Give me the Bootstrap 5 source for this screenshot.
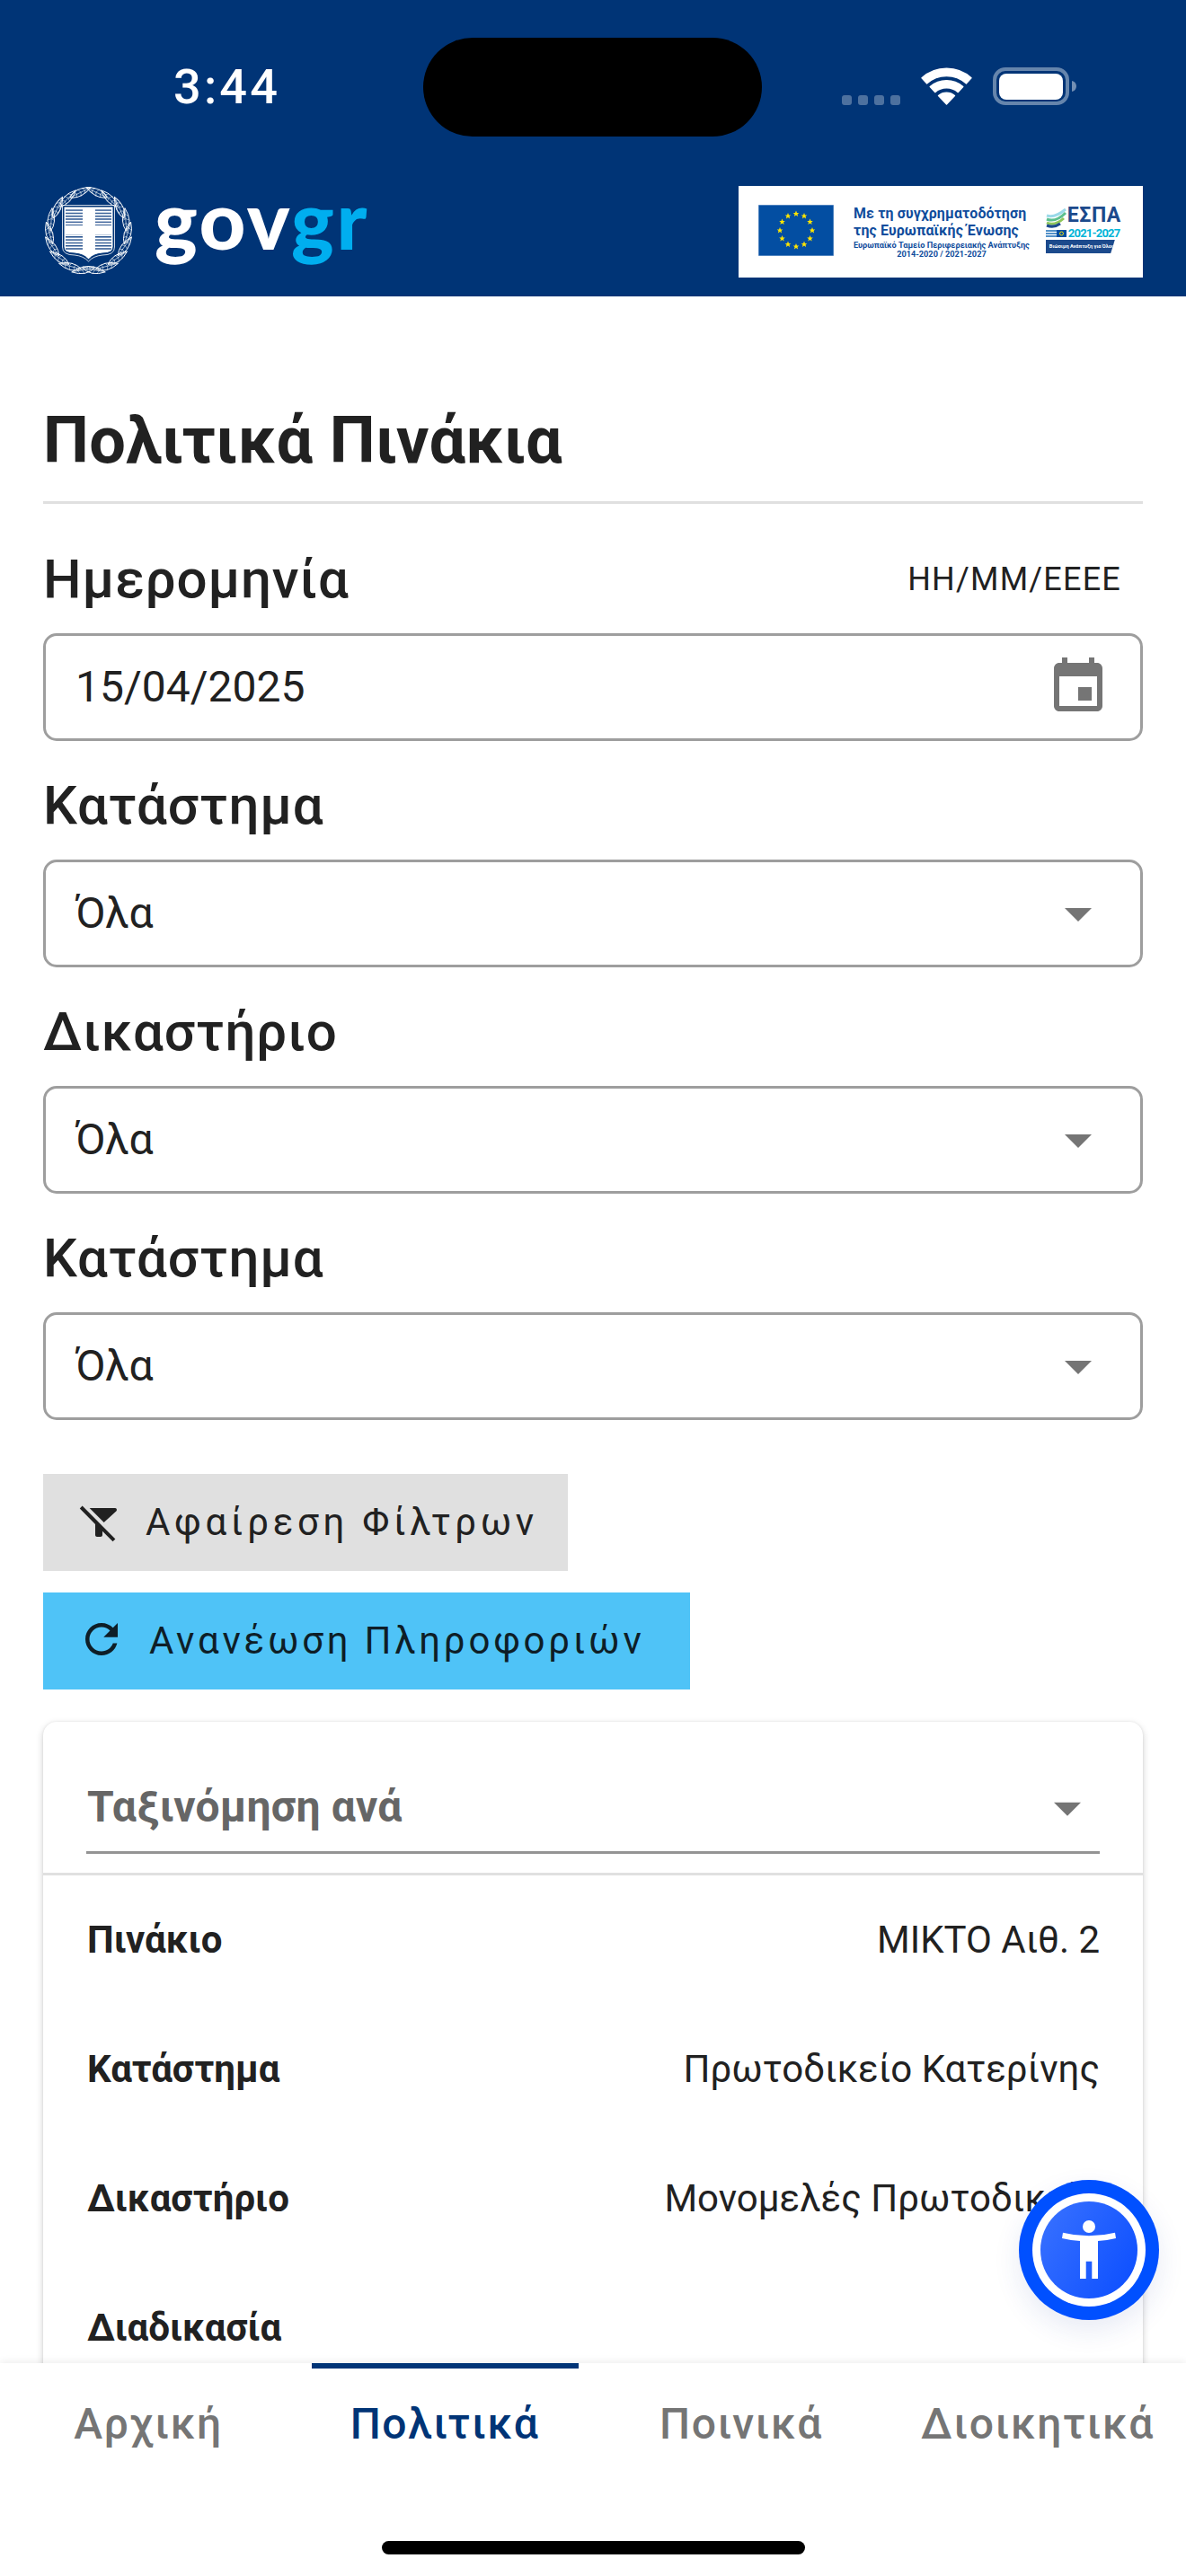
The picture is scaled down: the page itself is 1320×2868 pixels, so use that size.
<!DOCTYPE html>
<html lang="el">
<head>
<meta charset="utf-8">
<title>Πολιτικά Πινάκια</title>
<link href="https://cdn.jsdelivr.net/npm/bootstrap@5.3.0/dist/css/bootstrap.min.css" rel="stylesheet">
<style>
body{font-family:Roboto,"Liberation Sans",sans-serif;color:#212121;background:#fff}
.gov-head{background:#003476;height:330px;flex:0 0 330px}
.status-row{height:110px;margin-top:42px;margin-bottom:55px;color:#fff}
.clock{flex:0 0 471px;padding-left:193px;font-size:54px;font-weight:500;line-height:110px;letter-spacing:3.2px}
.island{flex:0 0 377px;height:110px;background:#000;border-radius:55px}
.sys-icons{padding-left:89px;height:42px;margin-top:33px;align-items:flex-end}
.sig-dot{width:11px;height:11px;border-radius:3px;background:rgba(255,255,255,.3);margin-right:7px}
.wifi-ic{margin-left:16px;margin-right:23px}
.brand-row{padding:0 48px;height:102px}
.emblem{margin-right:23px}
.gov-word{font-family:Lato,sans-serif;font-weight:900;font-size:90px;line-height:100px;letter-spacing:2.6px;color:#fff;margin-top:-30px}
.gov-word span{color:#00aeef}
.espa-box{width:450px;height:102px;background:#fff;padding:21px 27px 0 22px;color:#0f4c9c}
.espa-txt{width:196px;margin-left:22px;font-weight:700;text-align:center;white-space:nowrap}
.espa-l1{font-size:15.9px;line-height:19px;text-align:left;letter-spacing:.15px}
.espa-l3{font-size:9.2px;line-height:11px;margin-top:1px;text-align:left}
.espa-l4{font-size:9.2px;line-height:10px}
.espa-mark{margin-left:18px;width:84px;white-space:nowrap}
.espa-name{font-size:23px;font-weight:700;line-height:24px;color:#1c4a8c;letter-spacing:.6px;margin-left:24px}
.espa-yrs{font-size:13px;font-weight:700;line-height:14px;color:#00b4d8;margin-left:25px;margin-top:1px;letter-spacing:-.8px}
.espa-tag{font-size:5.6px;font-weight:700;line-height:15px;height:15px;width:77px;background:#1c4a8c;color:#fff;padding-left:4px;clip-path:polygon(0 0,100% 0,94% 100%,0 100%)}
.waves{left:0;top:3px}
.main-pane{padding:119px 48px 0;min-height:0}
.page-title{font-size:72px;line-height:84px;font-weight:700;letter-spacing:.3px;padding-bottom:25px;margin:0 0 48px;border-bottom:3px solid #e0e0e0;color:#212121}
.fld-head{height:72px;margin-bottom:24px}
.fld-label{font-size:60px;line-height:72px;font-weight:500;letter-spacing:.85px;margin:0}
.fld-hint{font-size:36px;line-height:72px;padding-right:24px;letter-spacing:1.2px}
.fld-box{height:120px;border:3px solid #9e9e9e;border-radius:15px;padding:0 33px;font-size:48px;line-height:56px;color:#212121;margin-bottom:36px;background:#fff}
.fld-box:last-child{margin-bottom:0}
.fld-ic{fill:#757575;flex:none}
.act-wrap{margin-top:60px;gap:24px}
.act-btn{height:108px;border:0;border-radius:0;font-size:42px;line-height:50px;letter-spacing:4.7px;color:#212121;padding:0 0 0 38px;white-space:nowrap}
.act-clear{width:584px;background:#e0e0e0;gap:22px}
.act-clear:hover{background:#e0e0e0}
.act-refresh{width:720px;background:#4fc3f7;color:#0e1e27;gap:26px;letter-spacing:3.75px}
.act-refresh:hover{background:#4fc3f7}
.act-btn svg{fill:#212121;flex:none}
.act-refresh svg{fill:#0e1e27}
.list-card{margin-top:36px;border:0;border-radius:15px 15px 0 0;box-shadow:0 3px 9px rgba(0,0,0,.18),0 0 3px rgba(0,0,0,.08)}
.sort-head{padding:67px 48px 21px;border-bottom:3px solid #e0e0e0}
.sort-line{border-bottom:3px solid #949494;padding:0 0 21px 1px;font-size:48px;line-height:56px;font-weight:700;letter-spacing:.2px;color:#666}
.rec-body{padding:48px 48px 0 48px;font-size:42px;line-height:48px}
.rec-row{margin-bottom:96px;white-space:nowrap}
.rec-key{font-weight:700;padding-left:1px}
.bottom-tabs{flex:0 0 237px;height:237px;background:#fff;box-shadow:0 -2px 8px rgba(0,0,0,.07);z-index:2;margin:0;padding:0;flex-wrap:nowrap}
.tab-item{flex:0 0 330px;padding:40px 0 0;text-align:center;font-size:48px;line-height:56px;font-weight:500;color:#757575;letter-spacing:1.6px}
.tab-item:hover{color:#757575}
.tab-on{color:#003476}
.tab-on:hover{color:#003476}
.tab-on::before{content:"";position:absolute;left:17px;right:16px;top:0;height:6px;background:#003476}
.home-bar{left:425px;top:2829px;width:471px;height:15px;background:#000;border-radius:8px;z-index:3}
.a11y-fab{right:30px;top:2427px;width:156px;height:156px;padding:15px;background:#0050ff;border-radius:50%;box-shadow:0 12px 30px rgba(30,60,160,.1);z-index:4}
.a11y-ring{width:126px;height:126px;padding:9px;background:#fff;border-radius:50%}
.a11y-core{width:108px;height:108px;border-radius:50%;background:linear-gradient(120deg,#3a72ff,#0a4dff)}
</style>
</head>
<body class="d-flex flex-column vh-100 overflow-hidden position-relative">
<header class="gov-head">
  <div class="status-row d-flex">
    <div class="clock">3:44</div>
    <div class="island"></div>
    <div class="sys-icons d-flex">
      <span class="sig-dot"></span><span class="sig-dot"></span><span class="sig-dot"></span><span class="sig-dot"></span>
      <svg class="wifi-ic" width="57" height="42" viewBox="0 0 57 42" fill="#fff" stroke="#fff" stroke-width="1.4" stroke-linejoin="round"><path d="M1 11.8A41 41 0 0 1 56 11.8L50.5 17.9A33 33 0 0 0 6.5 17.9Z"/><path d="M10.2 21.6A28 28 0 0 1 46.8 21.6L41.3 27.6A19.5 19.5 0 0 0 15.7 27.6Z"/><path d="M19.5 31.6A14 14 0 0 1 37.5 31.6L28.5 41Z"/></svg>
      <svg width="93" height="42" viewBox="0 0 93 42"><rect x="2" y="2" width="81" height="38" rx="12" fill="none" stroke="#fff" stroke-opacity=".4" stroke-width="4"/><rect x="7" y="7" width="71" height="29" rx="8" fill="#fff"/><path d="M88 15c3 .6 5 3 5 6s-2 5.400-5 6Z" fill="#fff" fill-opacity=".45"/></svg>
    </div>
  </div>
  <div class="brand-row d-flex justify-content-between align-items-center">
    <div class="d-flex align-items-center">
      <svg class="emblem" width="101" height="102" viewBox="0 0 101 102">
        <defs>
          <g id="lf" fill="none" stroke="#fff" stroke-width=".9"><path d="M-13 0Q-2 -8 13 0Q-2 7 -13 0Z"/><path d="M-12 0H12" stroke-width=".6"/><path d="M-6 -3.500L-4 0M-1 -4.500L1 0M4 -3.500L6 0M-6 3L-4 0M-1 4L1 0M4 3L6 0" stroke-width=".5"/></g>
          <g id="sd">
            <use href="#lf" transform="rotate(-72 50.5 51) translate(50.5 7.500) rotate(-14)"/>
            <use href="#lf" transform="rotate(-52 50.5 51) translate(50.5 7.500) rotate(-14)"/>
            <use href="#lf" transform="rotate(-32 50.5 51) translate(50.5 7.500) rotate(-14)"/>
            <use href="#lf" transform="rotate(-12 50.5 51) translate(50.5 6.500) rotate(-14)"/>
            <use href="#lf" transform="rotate(-92 50.5 51) translate(50.5 7.500) rotate(-14)"/>
            <use href="#lf" transform="rotate(-112 50.500 51) translate(50.5 7.500) rotate(-14)"/>
            <use href="#lf" transform="rotate(-132 50.500 51) translate(50.5 7.500) rotate(-14)"/>
            <use href="#lf" transform="rotate(-152 50.500 51) translate(50.5 7.500) rotate(-14)"/>
            <use href="#lf" transform="rotate(-172 50.500 51) translate(50.500 8) rotate(-18)"/>
          </g>
          <pattern id="st" width="6" height="3.300" patternUnits="userSpaceOnUse"><rect width="6" height="3.300" fill="#fff"/><rect width="6" height="1.400" fill="#234f8c"/></pattern>
        </defs>
        <use href="#sd"/>
        <use href="#sd" transform="translate(101 0) scale(-1 1)"/>
        <path d="M23 23H78V68Q78 75 66 75Q55 76 50.500 82Q46 76 35 75Q23 75 23 68Z" fill="#fff" stroke="#003476" stroke-width="1"/>
        <path d="M21.500 21.500H79.500V68Q79.500 77 66 77Q56 78 50.500 84Q45 78 35 77Q21.500 77 21.500 68Z" fill="none" stroke="#fff" stroke-width=".8"/>
        <rect x="25" y="25" width="19" height="19" fill="url(#st)"/><rect x="58" y="25" width="18" height="19" fill="url(#st)"/><rect x="25" y="54" width="19" height="17" fill="url(#st)"/><rect x="58" y="54" width="18" height="17" fill="url(#st)"/>
      </svg>
      <div class="gov-word">gov<span>gr</span></div>
    </div>
    <div class="espa-box d-flex">
      <svg width="84" height="57" viewBox="0 0 84 57" class="flex-shrink-0">
        <defs><polygon id="str" points="0,-3.400 1,-1 3.300,-1 1.500,.5 2.100,2.900 0,1.400 -2.100,2.900 -1.500,.5 -3.300,-1 -1,-1" fill="#ffe500"/></defs>
        <rect width="84" height="57" fill="#034ea2" stroke="#9db8dc" stroke-width="1"/>
        <use href="#str" x="42" y="10"/><use href="#str" x="51" y="12.500"/><use href="#str" x="57.500" y="19"/><use href="#str" x="60" y="28.500"/><use href="#str" x="57.500" y="37.500"/><use href="#str" x="51" y="44"/><use href="#str" x="42" y="46.500"/><use href="#str" x="33" y="44"/><use href="#str" x="26.500" y="37.500"/><use href="#str" x="24" y="28.500"/><use href="#str" x="26.500" y="19"/><use href="#str" x="33" y="12.500"/>
      </svg>
      <div class="espa-txt">
        <div class="espa-l1">Με τη συγχρηματοδότηση</div>
        <div class="espa-l1">της Ευρωπαϊκής Ένωσης</div>
        <div class="espa-l3">Ευρωπαϊκό Ταμείο Περιφερειακής Ανάπτυξης</div>
        <div class="espa-l4">2014-2020 / 2021-2027</div>
      </div>
      <div class="espa-mark position-relative">
        <svg class="waves position-absolute" width="24" height="37" viewBox="0 0 24 37" fill="none" stroke-width="3"><path d="M1 9Q10 12 22 2" stroke="#9ad9e8"/><path d="M1 13Q11 17 22 6" stroke="#5bbf8e"/><path d="M1 17Q10 21 20 12" stroke="#8fc65b"/><path d="M1 20Q9 23 16 18" stroke="#1c4a8c"/><rect x="0" y="25" width="12" height="8" fill="#fff" stroke="none"/><path d="M0 26H12M0 29H12M0 32H12" stroke="#1c6fb8" stroke-width="1.400"/><rect x="12" y="25" width="11" height="8" fill="#034ea2" stroke="none"/><circle cx="17.500" cy="29" r="2" fill="none" stroke="#ffe500" stroke-width=".9"/></svg>
        <div class="espa-name">ΕΣΠΑ</div>
        <div class="espa-yrs">2021-2027</div>
        <div class="espa-tag">Βιώσιμη Ανάπτυξη για Όλους</div>
      </div>
    </div>
  </div>
</header>

<main class="main-pane flex-grow-1 overflow-hidden">
  <h1 class="page-title">Πολιτικά Πινάκια</h1>
  <section>
    <div class="fld-head d-flex justify-content-between align-items-center"><label class="fld-label">Ημερομηνία</label><span class="fld-hint">ΗΗ/ΜΜ/ΕΕΕΕ</span></div>
    <div class="fld-box d-flex justify-content-between align-items-center"><span>15/04/2025</span><svg class="fld-ic" width="72" height="72" viewBox="0 0 24 24"><path d="M19 3h-1V1h-2v2H8V1H6v2H5c-1.110 0-1.990.9-1.990 2L3 19c0 1.100.89 2 2 2h14c1.100 0 2-.9 2-2V5c0-1.100-.9-2-2-2zm0 16H5V8h14v11zM17 12h-5v5h5z"/></svg></div>
    <div class="fld-head d-flex align-items-center"><label class="fld-label">Κατάστημα</label></div>
    <div class="fld-box d-flex justify-content-between align-items-center"><span>Όλα</span><svg class="fld-ic" width="72" height="72" viewBox="0 0 24 24"><path d="M7 10l5 5 5-5z"/></svg></div>
    <div class="fld-head d-flex align-items-center"><label class="fld-label">Δικαστήριο</label></div>
    <div class="fld-box d-flex justify-content-between align-items-center"><span>Όλα</span><svg class="fld-ic" width="72" height="72" viewBox="0 0 24 24"><path d="M7 10l5 5 5-5z"/></svg></div>
    <div class="fld-head d-flex align-items-center"><label class="fld-label">Κατάστημα</label></div>
    <div class="fld-box d-flex justify-content-between align-items-center"><span>Όλα</span><svg class="fld-ic" width="72" height="72" viewBox="0 0 24 24"><path d="M7 10l5 5 5-5z"/></svg></div>
  </section>
  <div class="act-wrap d-flex flex-column align-items-start">
    <button type="button" class="btn act-btn act-clear d-inline-flex align-items-center"><svg width="54" height="54" viewBox="0 -1.500 27 27"><path d="M21.790 5.610C22.300 4.950 21.830 4 21 4H6.830l8 8L21.790 5.610zM2.810 2.810L1.390 4.220L10 13v6c0 .55.45 1 1 1h2c.55 0 1-.45 1-1v-2.170l5.780 5.780l1.410-1.410L2.810 2.810z"/></svg><span>Αφαίρεση Φίλτρων</span></button>
    <button type="button" class="btn act-btn act-refresh d-inline-flex align-items-center"><svg width="54" height="54" viewBox="0 .9 24 24"><path d="M17.650 6.350C16.200 4.900 14.210 4 12 4c-4.420 0-7.990 3.580-7.990 8s3.570 8 7.990 8c3.730 0 6.840-2.550 7.730-6h-2.080c-.82 2.330-3.040 4-5.650 4-3.310 0-6-2.690-6-6s2.690-6 6-6c1.660 0 3.140.69 4.220 1.780L13 11h7V4l-2.350 2.350z"/></svg><span>Ανανέωση Πληροφοριών</span></button>
  </div>
  <div class="card list-card">
    <div class="sort-head">
      <div class="sort-line d-flex justify-content-between align-items-center"><span>Ταξινόμηση ανά</span><svg class="fld-ic" width="72" height="56" viewBox="0 2.400 24 18.670"><path d="M7 10l5 5 5-5z"/></svg></div>
    </div>
    <div class="rec-body">
      <div class="rec-row d-flex justify-content-between"><span class="rec-key">Πινάκιο</span><span>ΜΙΚΤΟ Αιθ. 2</span></div>
      <div class="rec-row d-flex justify-content-between"><span class="rec-key">Κατάστημα</span><span>Πρωτοδικείο Κατερίνης</span></div>
      <div class="rec-row d-flex justify-content-between"><span class="rec-key">Δικαστήριο</span><span>Μονομελές Πρωτοδικείο</span></div>
      <div class="rec-row d-flex justify-content-between"><span class="rec-key">Διαδικασία</span><span></span></div>
    </div>
  </div>
</main>

<nav class="nav bottom-tabs d-flex">
  <a class="nav-link tab-item" href="#">Αρχική</a>
  <a class="nav-link tab-item tab-on position-relative" href="#">Πολιτικά</a>
  <a class="nav-link tab-item" href="#">Ποινικά</a>
  <a class="nav-link tab-item" href="#">Διοικητικά</a>
</nav>
<div class="home-bar position-absolute"></div>
<div class="a11y-fab position-absolute">
  <div class="a11y-ring"><div class="a11y-core d-flex">
    <svg width="108" height="108" viewBox="0 0 108 108" fill="#fff"><circle cx="54" cy="28" r="7"/><path d="M25 34.700Q54 42 83 34.700L84 41Q74 43.500 64 44V86H57.300V66.700H50.700V86H44V44Q34 43.500 24 41Z"/></svg>
  </div></div>
</div>
</body>
</html>
